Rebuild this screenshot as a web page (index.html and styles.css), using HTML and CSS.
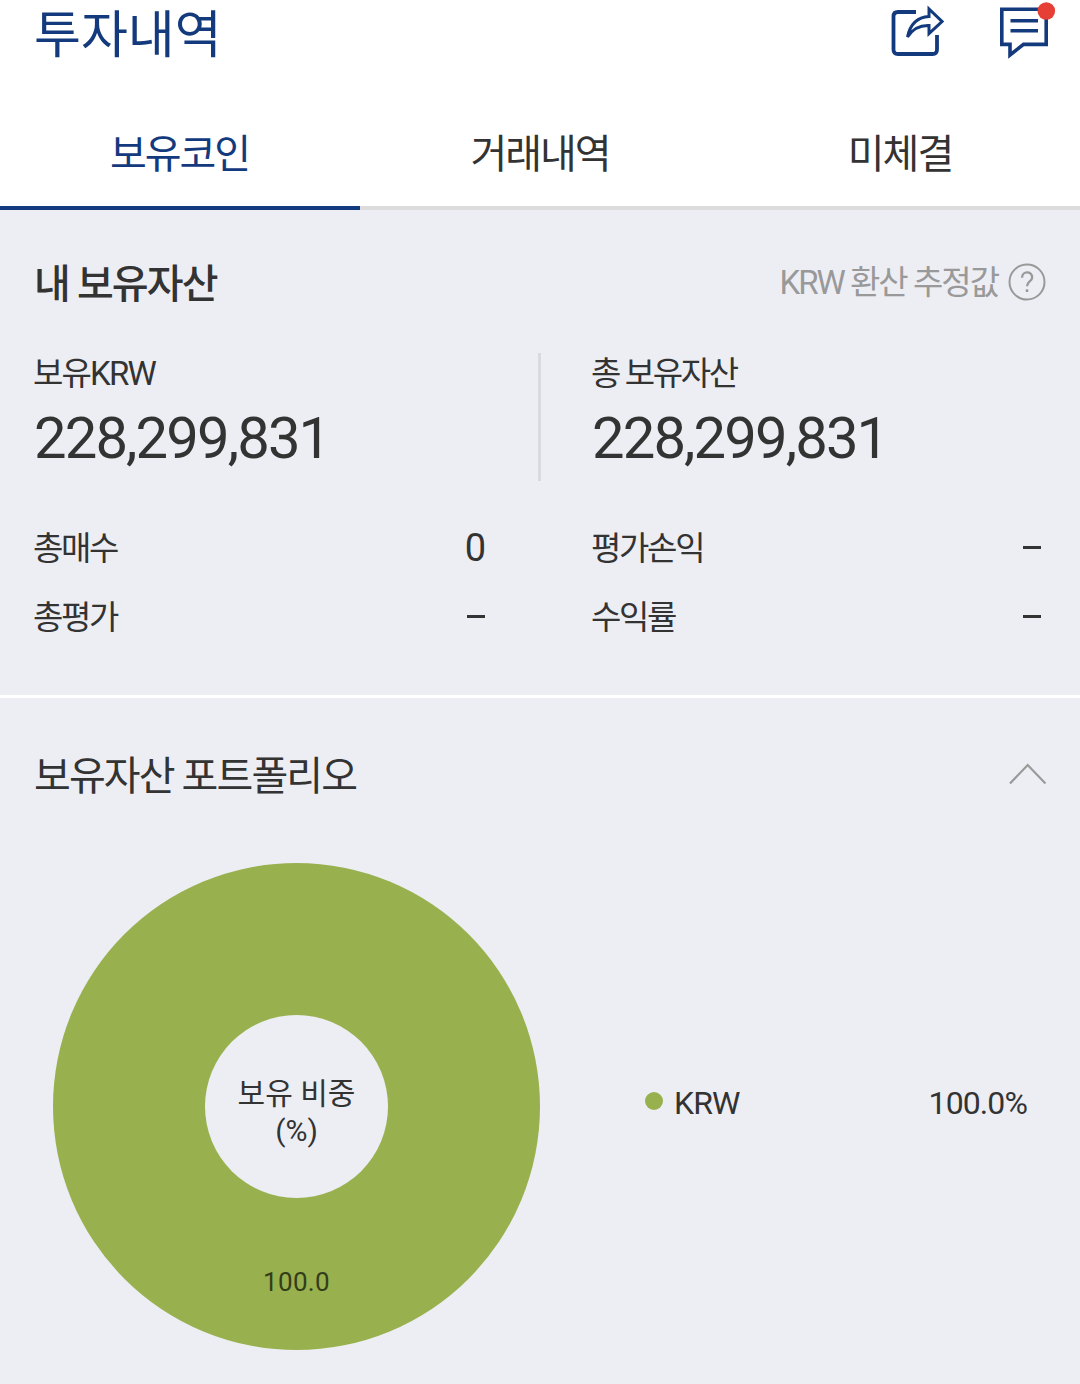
FILE: index.html
```html
<!DOCTYPE html>
<html lang="ko">
<head>
<meta charset="utf-8">
<title>투자내역</title>
<link rel="stylesheet" href="styles.css">
</head>
<body>
<header class="header">
  <h1 class="title">투자내역</h1>
  <div class="actions">
    <svg class="icon" width="56" height="60" viewBox="0 0 56 60" fill="none" stroke="#143a7e" stroke-width="3.8">
      <path d="M28 12H10Q5.500 12 5.500 16.500V49.500Q5.500 54 10 54H44.500Q49 54 49 49.500V35"/>
      <path d="M19.500 37Q23.500 17.500 41 16.500V9L54 21.500L41 33.500V25.500Q27 25 19.500 37Z" stroke-width="3"/>
    </svg>
    <svg class="icon" width="60" height="60" viewBox="0 0 60 60" fill="none" stroke="#143a7e" stroke-width="3.600">
      <path d="M5.800 9.200H50.200V44.400H27.500L14 55V44.400H5.800Z"/>
      <path d="M14.500 20.700H42M14.500 30.700H42"/>
      <circle cx="50.300" cy="11" r="8.800" fill="#e63f35" stroke="none"/>
    </svg>
  </div>
</header>
<nav class="tabs">
  <a class="tab tab-active">보유코인</a>
  <a class="tab">거래내역</a>
  <a class="tab">미체결</a>
</nav>
<section class="assets">
  <div class="section-head">
    <h2 class="assets-title">내 보유자산</h2>
    <div class="estimate">
      <span>KRW 환산 추정값</span>
      <svg class="help" width="38" height="38" viewBox="0 0 38 38" fill="none" stroke="#999" stroke-width="2">
        <circle cx="19" cy="19" r="17.500"/>
        <path d="M14 14.800C14 7.500 24.200 7.800 24.200 14.200C24.200 18.500 19 18.500 19 23.300" stroke-width="2.300"/>
        <path d="M19 26.300V29" stroke-width="2.500"/>
      </svg>
    </div>
  </div>
  <div class="balances">
    <div class="balance">
      <div class="label label-krw">보유KRW</div>
      <div class="amount">228,299,831</div>
    </div>
    <div class="balance balance-right">
      <div class="label">총 보유자산</div>
      <div class="amount">228,299,831</div>
    </div>
  </div>
  <div class="stats">
    <div class="stat"><span class="stat-name">총매수</span><span class="zero">0</span></div>
    <div class="stat"><span class="stat-name">평가손익</span><span class="dash"></span></div>
    <div class="stat"><span class="stat-name">총평가</span><span class="dash"></span></div>
    <div class="stat"><span class="stat-name">수익률</span><span class="dash"></span></div>
  </div>
</section>
<section class="portfolio">
  <div class="portfolio-head">
    <h2 class="portfolio-title">보유자산 포트폴리오</h2>
    <svg width="40" height="24" viewBox="0 0 40 24" fill="none" stroke="#999" stroke-width="2.200"><path d="M4 20.500L21.700 2L39.500 20.500"/></svg>
  </div>
  <div class="chart-row">
    <div class="donut">
      <div class="donut-hole"><span>보유 비중</span><span>(%)</span></div>
      <div class="donut-value">100.0</div>
    </div>
    <div class="legend">
      <span class="dot"></span>
      <span class="legend-name">KRW</span>
      <span class="legend-value">100.0%</span>
    </div>
  </div>
</section>
</body>
</html>
```

FILE: styles.css
```css
* { box-sizing: border-box; }

body {
  margin: 0;
  width: 1080px;
  height: 1384px;
  overflow: hidden;
  background: #edeef4;
  color: #333;
  font-family: Roboto, "Noto Sans CJK KR", sans-serif;
}

h1, h2 { margin: 0; font-weight: 400; }
svg { display: block; flex: none; }

.header {
  display: flex;
  justify-content: space-between;
  height: 100px;
  padding: 0 24px 0 34px;
  background: #fff;
}
.title {
  color: #143a7e;
  font-size: 51px;
  line-height: 72px;
}
.actions { display: flex; gap: 52px; }

.tabs {
  display: grid;
  grid-template-columns: repeat(3, 1fr);
  height: 110px;
  background: #fff;
}
.tab {
  padding-top: 25px;
  border-bottom: 4px solid #dcdcdc;
  font-size: 40px;
  line-height: 60px;
  letter-spacing: -2px;
  text-align: center;
}
.tab-active { padding-right: 1px; color: #143a7e; border-color: #143a7e; }

.assets {
  height: 488px;
  padding: 43px 34px 0;
  border-bottom: 3px solid #fff;
}
.section-head {
  display: flex;
  justify-content: space-between;
  height: 60px;
}
.assets-title {
  font-size: 40px;
  font-weight: 500;
  line-height: 64px;
  letter-spacing: -1.900px;
}
.estimate {
  display: flex;
  gap: 10px;
  align-items: center;
  color: #999;
  font-size: 33px;
  line-height: 60px;
  letter-spacing: -2px;
}
.help { margin-bottom: 3px; }
.balances {
  display: grid;
  grid-template-columns: 504px 1fr;
  margin-top: 40px;
}
.balance { height: 128px; }
.balance-right {
  padding-left: 51px;
  border-left: 3px solid #d9dade;
}
.label {
  margin-left: -1px;
  font-size: 33px;
  line-height: 42px;
  letter-spacing: -2.400px;
}
.label-krw { letter-spacing: -1.800px; }
.amount {
  margin-top: 9px;
  font-size: 58px;
  line-height: 68px;
  letter-spacing: -1.900px;
}
.stats {
  display: grid;
  grid-template-columns: 451px 451px;
  column-gap: 107px;
  margin-top: 32px;
}
.stat {
  display: flex;
  justify-content: space-between;
  align-items: center;
  height: 69px;
  font-size: 33px;
  letter-spacing: -2.300px;
}
.stat:nth-child(even) { padding-right: 2px; }
.stat-name { margin: 0 0 3px -1px; }
.zero { margin-right: -1px; font-size: 38px; letter-spacing: 0; }
.dash { width: 18px; height: 3px; background: #333; }

.portfolio { padding: 47px 34px 0; }
.portfolio-head {
  display: flex;
  justify-content: space-between;
  align-items: center;
  height: 60px;
}
.portfolio-title {
  padding-top: 4px;
  font-size: 40px;
  line-height: 60px;
  letter-spacing: -1.900px;
}
.chart-row {
  display: flex;
  align-items: center;
  margin-top: 58px;
  padding-left: 19px;
}
.donut {
  display: flex;
  flex-direction: column;
  align-items: center;
  width: 487px;
  height: 487px;
  padding-top: 152px;
  border-radius: 50%;
  background: #98b14e;
}
.donut-hole {
  display: flex;
  flex-direction: column;
  align-items: center;
  width: 183px;
  height: 183px;
  padding-top: 60px;
  border-radius: 50%;
  background: #edeef4;
  font-size: 30px;
  line-height: 37px;
}
.donut-value {
  margin-top: 69px;
  color: #333d1a;
  font-size: 26px;
  line-height: 30px;
  letter-spacing: 0.300px;
}
.legend {
  display: flex;
  flex: 1;
  align-items: center;
  margin: -8px 19px 0 105px;
  font-size: 32px;
  line-height: 40px;
  letter-spacing: -0.900px;
}
.dot {
  width: 18px;
  height: 18px;
  margin-top: -3px;
  border-radius: 50%;
  background: #98b14e;
}
.legend-name { margin-left: 11px; }
.legend-value { margin-left: auto; }
```
